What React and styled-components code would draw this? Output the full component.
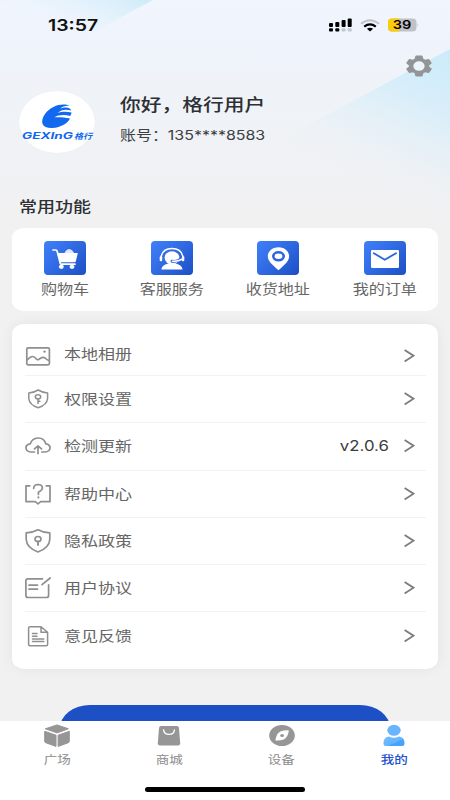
// Libs
import React, { useState } from 'react';
import styled, { createGlobalStyle } from 'styled-components';

// Styles
const GlobalStyle = createGlobalStyle`
  * {
    box-sizing: border-box;
  }

  body {
    margin: 0;
    background: #f1f1f1;
    font-family: Inter, 'Noto Sans CJK SC', sans-serif;
  }
`;

const Page = styled.div`
  position: relative;
  width: 450px;
  height: 800px;
  display: flex;
  flex-direction: column;
  overflow: hidden;
  background: linear-gradient(#f0f5fe 0, #eff4fc 40px, #eff3f8 90px, #f1f1f2 210px, #f1f1f1 100%);
`;

const Backdrop = styled.svg`
  position: absolute;
  top: 0;
  left: 0;
`;

const Content = styled.main`
  position: relative;
  flex: 1;
  min-height: 0;
  display: flex;
  flex-direction: column;
  overflow: hidden;
`;

const Text = styled.span`
  display: block;
  font-size: ${({ size }) => size}px;
  line-height: ${({ line }) => line || 20}px;
  font-weight: ${({ weight }) => weight || 400};
  color: ${({ color }) => color || '#666'};
  white-space: nowrap;
  transform: scaleX(${({ stretch }) => stretch || 1.2});
  transform-origin: ${({ origin }) => origin || 'left'} center;
`;

const StatusBar = styled.div`
  flex: none;
  height: 50px;
  padding: 0 31px 0 48px;
  display: flex;
  align-items: center;
  justify-content: space-between;
`;

const SettingsRow = styled.div`
  flex: none;
  height: 31px;
  padding-right: 18px;
  display: flex;
  align-items: center;
  justify-content: flex-end;
`;

const Profile = styled.section`
  flex: none;
  height: 72px;
  padding: 10px 19px 0;
  display: flex;
  gap: 25px;
`;

const Avatar = styled.div`
  width: 76px;
  height: 62px;
  border-radius: 50%;
  background: #fff;
  box-shadow: 0 0 1px #dfe4ea;
`;

const UserInfo = styled.div`
  padding-top: 2px;
  display: flex;
  flex-direction: column;
  gap: 8px;
`;

const SectionTitle = styled.div`
  flex: none;
  margin: 44px 19px 11px;
`;

const Shortcuts = styled.section`
  flex: none;
  height: 83px;
  margin: 0 12px;
  padding-top: 13px;
  display: grid;
  grid-template-columns: repeat(4, 1fr);
  border-radius: 12px / 10px;
  background: #fff;
`;

const Shortcut = styled.div`
  display: flex;
  flex-direction: column;
  align-items: center;
  gap: 4px;
`;

const ShortcutIcon = styled.div`
  width: 42px;
  height: 34px;
  border-radius: 4px;
  background: linear-gradient(135deg, #4080fa, #2f69e2 50%, #1d4fc3);
`;

const Menu = styled.section`
  flex: none;
  height: 345px;
  margin: 13px 12px 0;
  padding: 4px 12px 0 13px;
  border-radius: 12px / 10px;
  background: #fff;
  box-shadow: 0 0 14px rgba(0, 0, 0, .06);
`;

const MenuItem = styled.div`
  height: ${({ first }) => first ? '48px' : '47.3px'};
  padding: ${({ first }) => first ? '9px 11px 0 0' : '0 11px 0 0'};
  display: flex;
  align-items: center;
  border-bottom: ${({ last }) => !last && '1px solid #f2f2f2'};
`;

const MenuLabel = styled.div`
  flex: 1;
  margin-left: 13px;
  margin-top: ${({ first }) => first ? '-4px' : '0'};
`;

const MenuValue = styled.div`
  margin-right: 15px;
`;

const LogoutButton = styled.button`
  flex: none;
  width: 330px;
  height: 46px;
  margin: 36px auto 0;
  border: 0;
  border-radius: 30px / 23px;
  background: #1c50c4;
`;

const TabBar = styled.nav`
  position: relative;
  flex: none;
  height: 79px;
  padding-top: 2px;
  background: #fff;
`;

const Tabs = styled.div`
  height: 64px;
  padding-left: 1px;
  display: grid;
  grid-template-columns: repeat(4, 1fr);
`;

const Tab = styled.div`
  display: flex;
  flex-direction: column;
  align-items: center;
  gap: 1px;
  cursor: pointer;
`;

const HomeIndicator = styled.div`
  width: 160px;
  height: 5px;
  margin: 0 auto;
  border-radius: 3px;
  background: #000;
`;

// Icons
const Line = ({ children, width = 26, height = 26 }) => (
  <svg
    width={width}
    height={height}
    viewBox={`0 0 ${width} ${height}`}
    fill="none"
    stroke="#8f8f8f"
    strokeWidth="1.7"
    strokeLinecap="round"
    strokeLinejoin="round"
  >
    {children}
  </svg>
);

const SignalIcon = () => (
  <svg width="24" height="14" viewBox="0 0 24 14">
    <rect x="0" y="5" width="4" height="4" rx="1" />
    <rect x="6.3" y="4" width="4" height="5" rx="1" />
    <rect x="12.6" y="2" width="4" height="7" rx="1" />
    <rect x="18.7" y=".5" width="4" height="8.5" rx="1" />
    <rect x="0" y="10.2" width="4" height="3.2" rx="1" />
    <rect x="6.3" y="10.2" width="4" height="3.2" rx="1" />
    <rect x="12.6" y="10.2" width="4" height="3.2" rx="1" fill="#c5c7cc" />
    <rect x="18.7" y="10.2" width="4" height="3.2" rx="1" fill="#c5c7cc" />
  </svg>
);

const WifiIcon = () => (
  <svg width="20" height="13" viewBox="0 0 20 13" fill="none" strokeWidth="2">
    <path d="M1 4.8Q10-2.4 19 4.8" stroke="#bfc2c8" />
    <path d="M4.2 7.6Q10 3.2 15.8 7.6" stroke="#000" strokeWidth="2.2" />
    <path d="M6.9 9.7Q10 7.6 13.1 9.7L10 12.4z" fill="#000" />
  </svg>
);

const BatteryIcon = () => (
  <svg width="31" height="14" viewBox="0 0 31 14">
    <rect x="0" y=".5" width="28.5" height="13" rx="4" fill="#c1c2c8" />
    <path d="M4 .5H11.5V13.5H4Q0 13.5 0 9.5V4.5Q0 .5 4 .5z" fill="#fccb0c" />
    <path d="M29.5 5Q31 7 29.5 9z" fill="#b9bbc1" />
    <text x="4.8" y="11.3" fontSize="12" fontWeight="600" textLength="18.5" lengthAdjust="spacingAndGlyphs">39</text>
  </svg>
);

const StatusIcons = styled.div`
  display: flex;
  align-items: center;

  svg:nth-child(2) {
    margin: 0 8px 0 7px;
  }
`;

const GearIcon = () => (
  <svg width="26" height="22" viewBox="0 0 26 22">
    <ellipse cx="13" cy="11" rx="6.5" ry="5.5" fill="#edf5fc" />
    <path
      fillRule="evenodd"
      fill="#929495"
      d="M9.3 1.2Q9.5.5 10.5.5H15.5Q16.5.5 16.7 1.2L17.3 3.7L19.3 4.7L22.2 3.9Q23 3.8 23.4 4.4L25.6 7.7Q26 8.3 25.3 8.8L23.2 10.3V11.8L25.3 13.3Q26 13.8 25.6 14.4L23.3 17.6Q22.9 18.2 22 18L19.3 17.2L17.3 18.3L16.7 20.8Q16.5 21.6 15.5 21.6H10.5Q9.5 21.6 9.3 20.8L8.7 18.3L6.7 17.2L4 18Q3.1 18.2 2.7 17.6L.4 14.4Q0 13.8.7 13.3L2.8 11.8V10.3L.7 8.8Q0 8.3.4 7.7L2.6 4.4Q3 3.8 3.8 3.9L6.7 4.7L8.7 3.7ZM13 6.3A5.6 4.7 0 1 0 13 15.8A5.6 4.7 0 1 0 13 6.3Z"
    />
  </svg>
);

const Logo = () => (
  <svg width="76" height="62" viewBox="0 0 76 62">
    <path
      d="M50.5 14.8C44 11.5 32 14.5 26 23C20.5 31 23 37.2 33 37C42 36.8 50.5 31 50.8 27.2C46 26.7 41 26 35.5 26.3C39 23.7 46 23.4 51.2 25Q52.8 22.3 52.5 21.5C48 20.3 42 20.5 38.5 22C42 18.5 47 17.8 52.2 19.6Q51.5 17 47.8 16.5C45.5 16.2 43 16.8 41.5 17.6C43.5 15.2 47 14.4 50.5 14.8Z"
      fill="#1268ee"
    />
    <g fill="#1268ee" fontStyle="italic">
      <text x="3" y="48.4" fontSize="8.8" fontWeight="700" textLength="51" lengthAdjust="spacingAndGlyphs">GEXInG</text>
      <text x="55" y="48.2" fontSize="7.8" fontWeight="700" textLength="18" lengthAdjust="spacingAndGlyphs">格行</text>
    </g>
  </svg>
);

const CartIcon = () => (
  <svg width="42" height="34" viewBox="0 0 42 34" fill="#fff">
    <path d="M20.5 12Q22 8.5 25 8Q28.5 8.5 30 12z" opacity=".85" />
    <path d="M13 12H33.8L31.8 20.5Q31.5 21.3 30.5 21.3H16.2z" />
    <path d="M9 9H11.8Q12.8 9 13.1 10L16.2 22.2Q16.5 23.2 17.5 23.2H31" fill="none" stroke="#fff" strokeWidth="1.7" strokeLinecap="round" />
    <ellipse cx="17.3" cy="25.8" rx="2.5" ry="2.1" />
    <ellipse cx="28" cy="25.8" rx="2.5" ry="2.1" />
  </svg>
);

const SupportIcon = () => (
  <svg width="42" height="34" viewBox="0 0 42 34" fill="#fff">
    <path d="M9.8 18Q10.5 7.6 21 7.6T32.2 18" fill="none" stroke="#fff" strokeWidth="1.5" />
    <rect x="8.7" y="15.3" width="2.5" height="5" rx="1" />
    <rect x="30.8" y="15.3" width="2.5" height="5" rx="1" />
    <ellipse cx="21" cy="16.8" rx="7.4" ry="6.6" />
    <path d="M10.3 28.6Q11 23.8 18 22.3H24Q30.8 23.8 31.6 28.6z" />
    <path d="M21 20.3Q26.5 21 30 17.8" fill="none" stroke="#2d66dc" strokeWidth="2.9" strokeLinecap="round" />
    <path d="M21.5 20.3Q27 20.6 31.5 18" fill="none" stroke="#fff" strokeWidth="1.6" strokeLinecap="round" />
  </svg>
);

const PinIcon = () => (
  <svg width="42" height="34" viewBox="0 0 42 34">
    <path d="M21.5 6.2C15 6.2 10.8 10.4 10.8 15.2C10.8 20 15 23.5 21.5 29.2C28 23.5 32.1 20 32.1 15.2C32.1 10.4 28 6.2 21.5 6.2z" fill="#fff" />
    <ellipse cx="21.5" cy="15.3" rx="5.2" ry="4" fill="#fff" stroke="#2d67de" strokeWidth="2.6" />
  </svg>
);

const MailIcon = () => (
  <svg width="42" height="34" viewBox="0 0 42 34">
    <rect x="7" y="9" width="28" height="18" rx="1.3" fill="#fff" />
    <path d="M9.8 12.2L20.8 18.8L32 12.2" fill="none" stroke="#2d67de" strokeWidth="1.9" strokeLinecap="round" strokeLinejoin="round" />
  </svg>
);

const AlbumIcon = () => (
  <Line>
    <rect x="1.8" y="4.8" width="22.6" height="17" rx="1.3" />
    <path d="M2.5 16.6Q5.6 13.3 7.7 13.5Q9.5 13.7 11.2 15.8Q12.8 17.5 14.2 16.1Q17.5 13.1 20 15Q22 17.1 23.8 17.3" />
    <circle cx="19.5" cy="8.6" r="1.2" fill="#8f8f8f" stroke="none" />
  </Line>
);

const PermissionIcon = () => (
  <Line>
    <g strokeWidth="1.5">
      <path d="M13.2 4Q18.2 7 22.6 7V12.5Q22 18.9 13.2 21.8Q4.4 18.9 3.8 12.5V7Q8.2 7 13.2 4z" />
      <ellipse cx="13" cy="10.8" rx="2.7" ry="2.1" />
      <path d="M13 13V17.4M13 15.2H14.9" />
    </g>
  </Line>
);

const UpdateIcon = () => (
  <Line>
    <path d="M9.5 19H6Q1.2 18.6.9 14.7Q1.2 11.2 5.3 10.8Q7 5.2 13 5T20.8 10.8Q24.8 11.2 25.1 14.7Q24.8 18.6 20 19H16.8" />
    <path d="M13 20.6V12.9M9.5 15.9L13 12.9L16.5 15.9" />
  </Line>
);

const HelpIcon = () => (
  <Line>
    <path d="M4.8 4.8H1V20.7H10.3L13 22.8L15.7 20.7H25V4.8H21.2" />
    <path d="M8.7 7.4Q8.8 3.6 13 3.5Q17.4 3.6 17.4 7Q17.3 9.2 13.4 11.2V13.5" />
    <path d="M13.4 16.3V16.5" strokeWidth="2" />
  </Line>
);

const PrivacyIcon = () => (
  <Line>
    <g transform="translate(0 .5)">
      <path d="M13 1.3Q18.5 4.3 24.8 4.3V11Q24.2 19.5 13 23.5Q1.8 19.5 1.2 11V4.3Q7.5 4.3 13 1.3z" />
      <ellipse cx="13" cy="10.5" rx="3" ry="2.5" />
      <path d="M13 13V16.5" strokeWidth="1.9" />
    </g>
  </Line>
);

const AgreementIcon = () => (
  <Line>
    <path d="M17.5 3.8H3Q.9 3.8.9 5.8V20.5Q.9 22.5 3 22.5H21.5Q23.6 22.5 23.6 20.5V9.8" />
    <path d="M4 10.2H12.5M4 14.2H12.5M17 9.7L25.2 3" />
  </Line>
);

const FeedbackIcon = () => (
  <Line>
    <g strokeWidth="1.5">
      <path d="M16 3.7H5Q3.6 3.7 3.6 5V21.5Q3.6 22.7 5 22.7H21.2Q22.6 22.7 22.6 21.5V9.3L16 3.7V9.3H22.3" />
      <path d="M7.5 10.5H12M7.5 13.2H12M7.5 15.9H18.8M7.5 18.5H18.8" />
    </g>
  </Line>
);

const ChevronIcon = () => (
  <svg width="11" height="14" viewBox="0 0 11 14" fill="none" stroke="#7c7c7c" strokeWidth="1.8">
    <path d="M.6 1L9.5 6.7L.6 12.4" />
  </svg>
);

const SquareIcon = () => (
  <svg width="28" height="26" viewBox="0 0 28 26" fill="#969696" stroke="#969696" strokeWidth="1" strokeLinejoin="round">
    <path d="M14.1 1.9L25.4 5.8L14.1 9.9L2.3 5.8z" />
    <path d="M1.7 8.3L13 12.2V23.4L3 19.8Q1.7 19.3 1.7 18.3z" />
    <path d="M26.3 8.3L15.1 12.2V23.4L25.1 19.8Q26.3 19.3 26.3 18.3z" />
  </svg>
);

const MallIcon = () => (
  <svg width="28" height="26" viewBox="0 0 28 26">
    <path d="M6.2 3H21.8Q23.8 3 24 5L25.2 20.2Q25.2 22.4 23 22.4H5Q2.8 22.4 2.8 20.2L4 5Q4.2 3 6.2 3z" fill="#969696" />
    <path d="M8.6 7Q9 11.3 14 11.4T19.4 7" fill="none" stroke="#fff" strokeWidth="1.4" strokeLinecap="round" />
  </svg>
);

const DeviceIcon = () => (
  <svg width="28" height="26" viewBox="0 0 28 26">
    <ellipse cx="14" cy="12.5" rx="12.8" ry="10.6" fill="#969696" />
    <path d="M20.9 7.4Q16 7.2 12.4 8.4Q8.5 10 7.3 17.4Q12 17.8 15.7 16.4Q19.7 14.6 20.9 7.4z" fill="#fff" />
    <ellipse cx="14.1" cy="12.5" rx="1.9" ry="1.6" fill="#969696" />
  </svg>
);

const MineIcon = () => (
  <svg width="28" height="26" viewBox="0 0 28 26">
    <defs>
      <linearGradient id="mine" x1="0" y1="0" x2="1" y2="1">
        <stop offset="0" stopColor="#77bdff" />
        <stop offset=".6" stopColor="#62b3fe" />
        <stop offset=".61" stopColor="#46a4fb" />
        <stop offset="1" stopColor="#42a2fa" />
      </linearGradient>
    </defs>
    <ellipse cx="14" cy="7.3" rx="6.7" ry="5.5" fill="#68b5fd" />
    <path d="M9 13.5Q14 16 19 13.5Q24.5 14.2 24.5 20.5Q24.5 23 22 23H6Q3.5 23 3.5 20.5Q3.5 14.2 9 13.5z" fill="url(#mine)" />
  </svg>
);

const shortcuts = [
  { label: '购物车', Icon: CartIcon },
  { label: '客服服务', Icon: SupportIcon },
  { label: '收货地址', Icon: PinIcon },
  { label: '我的订单', Icon: MailIcon },
];

const menuItems = [
  { label: '本地相册', Icon: AlbumIcon },
  { label: '权限设置', Icon: PermissionIcon },
  { label: '检测更新', Icon: UpdateIcon, value: 'v2.0.6' },
  { label: '帮助中心', Icon: HelpIcon },
  { label: '隐私政策', Icon: PrivacyIcon },
  { label: '用户协议', Icon: AgreementIcon },
  { label: '意见反馈', Icon: FeedbackIcon },
];

const tabs = [
  { label: '广场', Icon: SquareIcon },
  { label: '商城', Icon: MallIcon },
  { label: '设备', Icon: DeviceIcon },
  { label: '我的', Icon: MineIcon },
];

const App = () => {
  const [activeTab, setActiveTab] = useState('我的');

  const renderBackdrop = () => (
    <Backdrop width="450" height="220" viewBox="0 0 450 220">
      <defs>
        <linearGradient id="left" gradientUnits="userSpaceOnUse" x1="110" y1="-15" x2="85" y2="42">
          <stop offset="0" stopColor="#d0ecf9" />
          <stop offset="1" stopColor="#e6f3fb" stopOpacity="0" />
        </linearGradient>
        <linearGradient id="right" gradientUnits="userSpaceOnUse" x1="450" y1="60" x2="386" y2="198">
          <stop offset="0" stopColor="#cdebfa" />
          <stop offset=".35" stopColor="#daeef9" />
          <stop offset="1" stopColor="#edf1f4" stopOpacity="0" />
        </linearGradient>
      </defs>
      <path d="M0 0H153L60 50H0z" fill="url(#left)" />
      <path d="M450 49L200 183V220H450z" fill="url(#right)" />
    </Backdrop>
  );

  const renderProfile = () => (
    <Profile>
      <Avatar>
        <Logo />
      </Avatar>
      <UserInfo>
        <Text size={17} line={24} weight={500} color="#2c2f33" stretch={1.22}>你好，格行用户</Text>
        <Text size={13.3} color="#3c3f43">账号：135****8583</Text>
      </UserInfo>
    </Profile>
  );

  const renderMenu = () => (
    <Menu>
      {menuItems.map(({ label, Icon, value }, index) => (
        <MenuItem key={label} first={index === 0 ? 1 : undefined} last={index === menuItems.length - 1 ? 1 : undefined}>
          <Icon />
          <MenuLabel first={index === 0 ? 1 : undefined}>
            <Text size={14.2}>{label}</Text>
          </MenuLabel>
          {value && (
            <MenuValue>
              <Text size={14} color="#3c3c3c" origin="right">{value}</Text>
            </MenuValue>
          )}
          <ChevronIcon />
        </MenuItem>
      ))}
    </Menu>
  );

  return (
    <Page>
      <GlobalStyle />
      {renderBackdrop()}
      <Content>
        <StatusBar>
          <Text size={16.2} line={22} weight={600} color="#111">13:57</Text>
          <StatusIcons>
            <SignalIcon />
            <WifiIcon />
            <BatteryIcon />
          </StatusIcons>
        </StatusBar>
        <SettingsRow>
          <GearIcon />
        </SettingsRow>
        {renderProfile()}
        <SectionTitle>
          <Text size={15} weight={500} color="#2c2f33">常用功能</Text>
        </SectionTitle>
        <Shortcuts>
          {shortcuts.map(({ label, Icon }) => (
            <Shortcut key={label}>
              <ShortcutIcon>
                <Icon />
              </ShortcutIcon>
              <Text size={13.4} origin="center">{label}</Text>
            </Shortcut>
          ))}
        </Shortcuts>
        {renderMenu()}
        <LogoutButton aria-label="退出登录" />
      </Content>
      <TabBar>
        <Tabs>
          {tabs.map(({ label, Icon }) => (
            <Tab key={label} onClick={() => setActiveTab(label)}>
              <Icon />
              <Text
                size={11.3}
                origin="center"
                weight={activeTab === label ? 500 : 400}
                color={activeTab === label ? '#2450cc' : '#8c8c8c'}
              >
                {label}
              </Text>
            </Tab>
          ))}
        </Tabs>
        <HomeIndicator />
      </TabBar>
    </Page>
  );
};

export default App;
